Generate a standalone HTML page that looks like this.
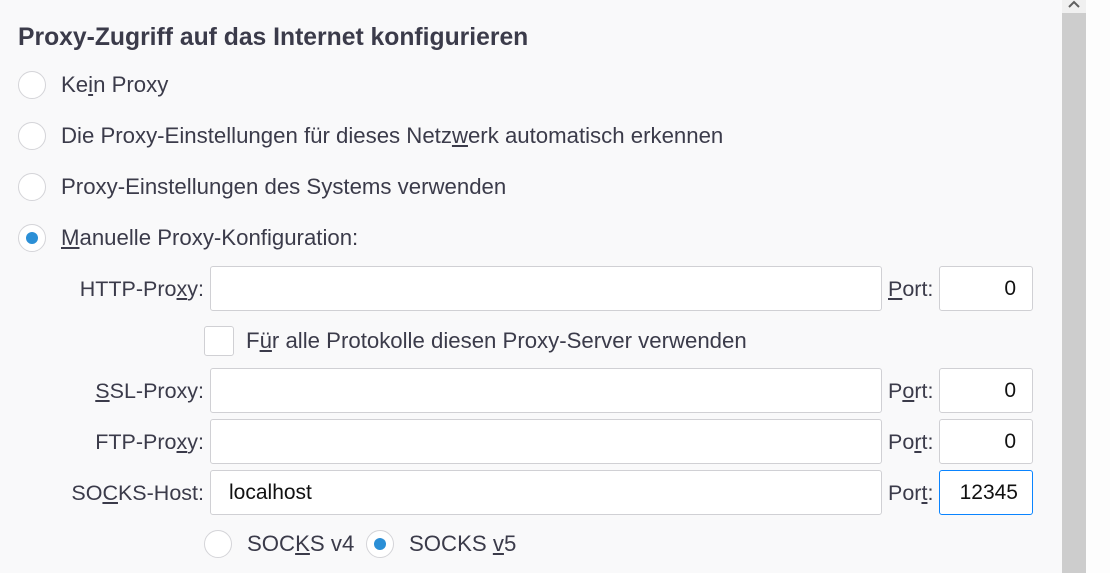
<!DOCTYPE html>
<html><head><style>
body{margin:0;width:1110px;height:573px;background:#f9f9fa;font-family:"Liberation Sans",sans-serif;color:#3b3b4a;position:relative;overflow:hidden;font-size:22.2px}
.a{position:absolute;white-space:nowrap;line-height:26px}
.r{position:absolute;width:26px;height:26px;border:1px solid #d4d4d8;border-radius:50%;background:#fff}
.r.on::after{content:"";position:absolute;left:7px;top:7px;width:12px;height:12px;border-radius:50%;background:#2b8fd6}
.in{position:absolute;background:#fff;border:1px solid #d0d0d4;border-radius:3px;box-sizing:border-box;height:45px;font-size:21px;color:#111;line-height:43px}
.lab{position:absolute;text-align:right;width:200px;left:4px;line-height:45px;white-space:nowrap;font-size:21.5px}
.p{line-height:45px!important;font-size:21.5px}
u{text-decoration:underline}
</style></head><body>
<div class="a" style="left:18px;top:25px;font-size:24.7px;font-weight:bold">Proxy-Zugriff auf das Internet konfigurieren</div>
<div class="r" style="left:18px;top:71px"></div><div class="a" style="left:61px;top:72px">Ke<u>i</u>n Proxy</div>
<div class="r" style="left:18px;top:122px"></div><div class="a" style="left:61px;top:123px">Die Proxy-Einstellungen für dieses Netz<u>w</u>erk automatisch erkennen</div>
<div class="r" style="left:18px;top:173px"></div><div class="a" style="left:61px;top:174px">Proxy-Einstellun<u>g</u>en des Systems verwenden</div>
<div class="r on" style="left:18px;top:224px"></div><div class="a" style="left:61px;top:225px"><u>M</u>anuelle Proxy-Konfiguration:</div>

<div class="lab" style="top:267px">HTTP-Pro<u>x</u>y:</div>
<div class="in" style="left:210px;top:266px;width:672px"></div>
<div class="a p" style="left:888px;top:267px"><u>P</u>ort:</div>
<div class="in" style="left:939px;top:266px;width:94px;text-align:right;padding-right:16px">0</div>

<div class="a" style="left:204px;top:326px;width:28px;height:28px;border:1px solid #d0d0d4;border-radius:3px;background:#fff"></div>
<div class="a" style="left:246px;top:328px">F<u>ü</u>r alle Protokolle diesen Proxy-Server verwenden</div>

<div class="lab" style="top:369px"><u>S</u>SL-Proxy:</div>
<div class="in" style="left:210px;top:368px;width:672px"></div>
<div class="a p" style="left:888px;top:369px">P<u>o</u>rt:</div>
<div class="in" style="left:939px;top:368px;width:94px;text-align:right;padding-right:16px">0</div>

<div class="lab" style="top:420px">FTP-Pro<u>x</u>y:</div>
<div class="in" style="left:210px;top:419px;width:672px"></div>
<div class="a p" style="left:888px;top:420px">Po<u>r</u>t:</div>
<div class="in" style="left:939px;top:419px;width:94px;text-align:right;padding-right:16px">0</div>

<div class="lab" style="top:471px">SO<u>C</u>KS-Host:</div>
<div class="in" style="left:210px;top:470px;width:672px;padding-left:18px">localhost</div>
<div class="a p" style="left:888px;top:471px">Por<u>t</u>:</div>
<div class="in" style="left:939px;top:470px;width:94px;text-align:right;padding-right:14px;border-color:#0a84ff">12345</div>

<div class="r" style="left:204px;top:530px"></div><div class="a" style="left:247px;top:531px">SOC<u>K</u>S v4</div>
<div class="r on" style="left:366px;top:530px"></div><div class="a" style="left:409px;top:531px">SOCKS <u>v</u>5</div>

<div class="a" style="left:1062px;top:0;width:24px;height:573px;background:#cdcdcd"></div>
<div class="a" style="left:1062px;top:0;width:24px;height:13px;background:#f0f0f0"></div>
<svg class="a" style="left:1068px;top:0" width="12" height="8"><path d="M1 7L6 2L11 7" stroke="#606060" stroke-width="2" fill="none"/></svg>
<div class="a" style="left:1086px;top:0;width:24px;height:573px;background:#fdfdfd"></div>
</body></html>
